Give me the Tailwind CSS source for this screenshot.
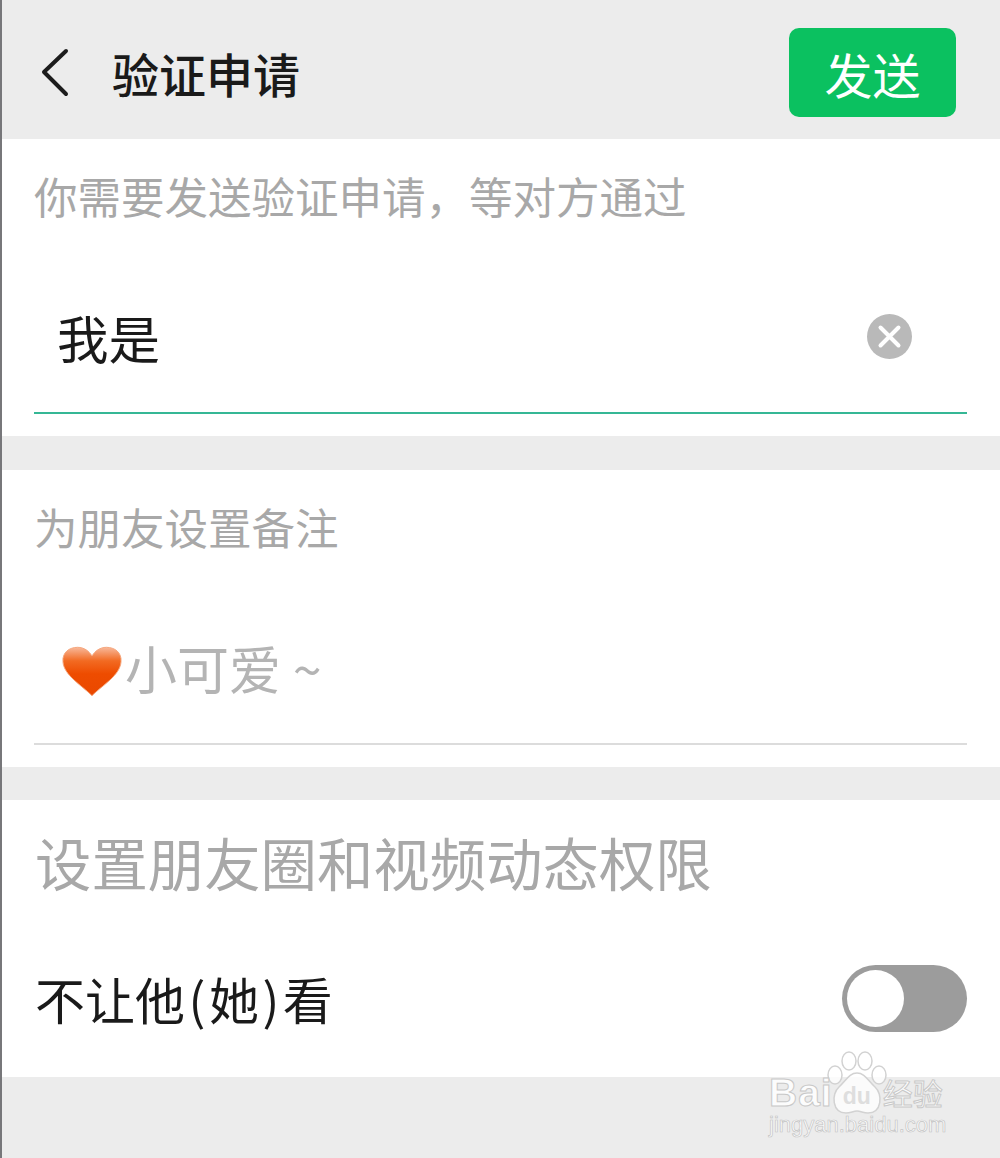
<!DOCTYPE html>
<html lang="zh-CN">
<head>
  <meta charset="UTF-8" />
  <meta name="viewport" content="width=device-width, initial-scale=1.0" />
  <title>验证申请</title>
  <script src="https://cdn.jsdelivr.net/npm/@tailwindcss/browser@4"></script>
</head>
<body class="bg-[#ececec] font-['Noto_Sans_CJK_SC','Noto_Sans',sans-serif]">
  <div class="relative h-[1158px] w-[1000px] overflow-hidden border-l-2 border-[#77777a]">

    <!-- header -->
    <header class="flex h-[139px] items-center pr-[44px] pl-[38px]">
      <svg class="mt-[6px] h-[50px] w-[32px]" viewBox="0 0 32 50" fill="none" stroke="#1c1c1c" stroke-width="4" stroke-linecap="round" stroke-linejoin="round"><path d="M26 3 4 24l22 22" /></svg>
      <h1 class="mt-[5px] ml-[40px] text-[47px] leading-none font-medium text-[#1a1a1a]">验证申请</h1>
      <button class="mt-[6px] ml-auto flex h-[89px] w-[167px] items-center justify-center rounded-[10px] bg-[#0bc160] text-[48px] leading-none text-white">发送</button>
    </header>

    <!-- verify message -->
    <section class="h-[297px] bg-white pr-[33px] pl-[32px]">
      <p class="pt-[32px] text-[43.5px] leading-[50px] text-[#a8a8a8]">你需要发送验证申请，等对方通过</p>
      <div class="mt-[63px] flex h-[130px] items-center border-b-2 border-[#35b795] pr-[55px] pb-[23px] pl-[23px]">
        <span class="text-[51.5px] leading-none text-[#1a1a1a]">我是</span>
        <svg class="ml-auto h-[45px] w-[45px]" viewBox="0 0 45 45"><circle cx="22.5" cy="22.5" r="22.5" fill="#b9b9b9" /><path d="M13.5 13.5l18 18m0-18-18 18" stroke="#fff" stroke-width="4" stroke-linecap="round" /></svg>
      </div>
    </section>

    <!-- remark -->
    <section class="mt-[34px] h-[297px] bg-white pr-[33px] pl-[32px]">
      <p class="pt-[32px] text-[43.5px] leading-[50px] text-[#a8a8a8]">为朋友设置备注</p>
      <div class="mt-[63px] flex h-[130px] items-center gap-[3px] border-b-2 border-[#dcdcdc] pb-[23px] pl-[28px]">
        <svg class="mt-[7px] h-[51px] w-[60px]" viewBox="0 0 62 52">
          <defs>
            <linearGradient id="heart" x1="0" y1="0" x2="0" y2="1">
              <stop offset="0" stop-color="#f8b89a" />
              <stop offset="0.28" stop-color="#f26a22" />
              <stop offset="0.55" stop-color="#ee4c00" />
              <stop offset="1" stop-color="#ea4800" />
            </linearGradient>
          </defs>
          <path d="M31 51C20 40 2 30 1 16 0 6 8 1 16 1c7 0 12 4 15 9C34 5 39 1 46 1c8 0 16 5 15 15C60 30 42 40 31 51Z" fill="url(#heart)" stroke="#f6a67c" stroke-width="1" />
        </svg>
        <span class="mt-[1px] text-[52px] leading-none text-[#b4b4b4]">小可爱 ~</span>
      </div>
    </section>

    <!-- permissions -->
    <section class="mt-[33px] h-[277px] bg-white pr-[33px] pl-[33px]">
      <p class="pt-[29px] text-[56.4px] leading-[66px] text-[#a8a8a8]">设置朋友圈和视频动态权限</p>
      <div class="mt-[68px] flex items-center justify-between">
        <span class="text-[50px] leading-[70px] text-[#1a1a1a]">不让他<span class="mx-[3.5px]">(</span>她<span class="mx-[3.5px]">)</span>看</span>
        <div class="flex h-[67px] w-[125px] items-center rounded-full bg-[#9c9c9c] pl-[5px]">
          <div class="h-[57px] w-[57px] rounded-full bg-white"></div>
        </div>
      </div>
    </section>

    <!-- watermark -->
    <div class="absolute top-[1076px] left-[767px] flex w-[180px] flex-col">
      <svg class="absolute top-[-25px] left-[58px] h-[66px] w-[60px]" viewBox="0 0 60 66" fill="#fff" fill-opacity="0.8" stroke="#d2d2d2" stroke-width="1.5">
        <ellipse cx="8" cy="24" rx="7" ry="9" />
        <ellipse cx="22" cy="10" rx="7" ry="9" />
        <ellipse cx="38" cy="10" rx="7" ry="9" />
        <ellipse cx="52" cy="24" rx="7" ry="9" />
        <path d="M30 22c8 0 11 8 18 14 8 7 7 26-7 26-5 0-7-2-11-2s-6 2-11 2C5 62 4 43 12 36c7-6 10-14 18-14Z" />
      </svg>
      <div class="relative flex h-[32px] items-center font-['Liberation_Sans',sans-serif] leading-none">
        <span class="text-[39px] font-bold tracking-[1px] text-white/85 [-webkit-text-stroke:1px_#c8c8c8]">Bai</span>
        <span class="mt-[8px] ml-[10px] text-[23px] font-bold text-[#dedede]">du</span>
        <span class="ml-[12px] font-['Noto_Sans_CJK_SC',sans-serif] text-[30px] text-white/85 [-webkit-text-stroke:1px_#c8c8c8]">经验</span>
      </div>
      <div class="mt-[6px] h-[22px] font-['Liberation_Sans',sans-serif] text-[22px] leading-[22px] whitespace-nowrap text-white/85 [-webkit-text-stroke:0.7px_#c4c4c4]">jingyan.baidu.com</div>
    </div>
  </div>
</body>
</html>
